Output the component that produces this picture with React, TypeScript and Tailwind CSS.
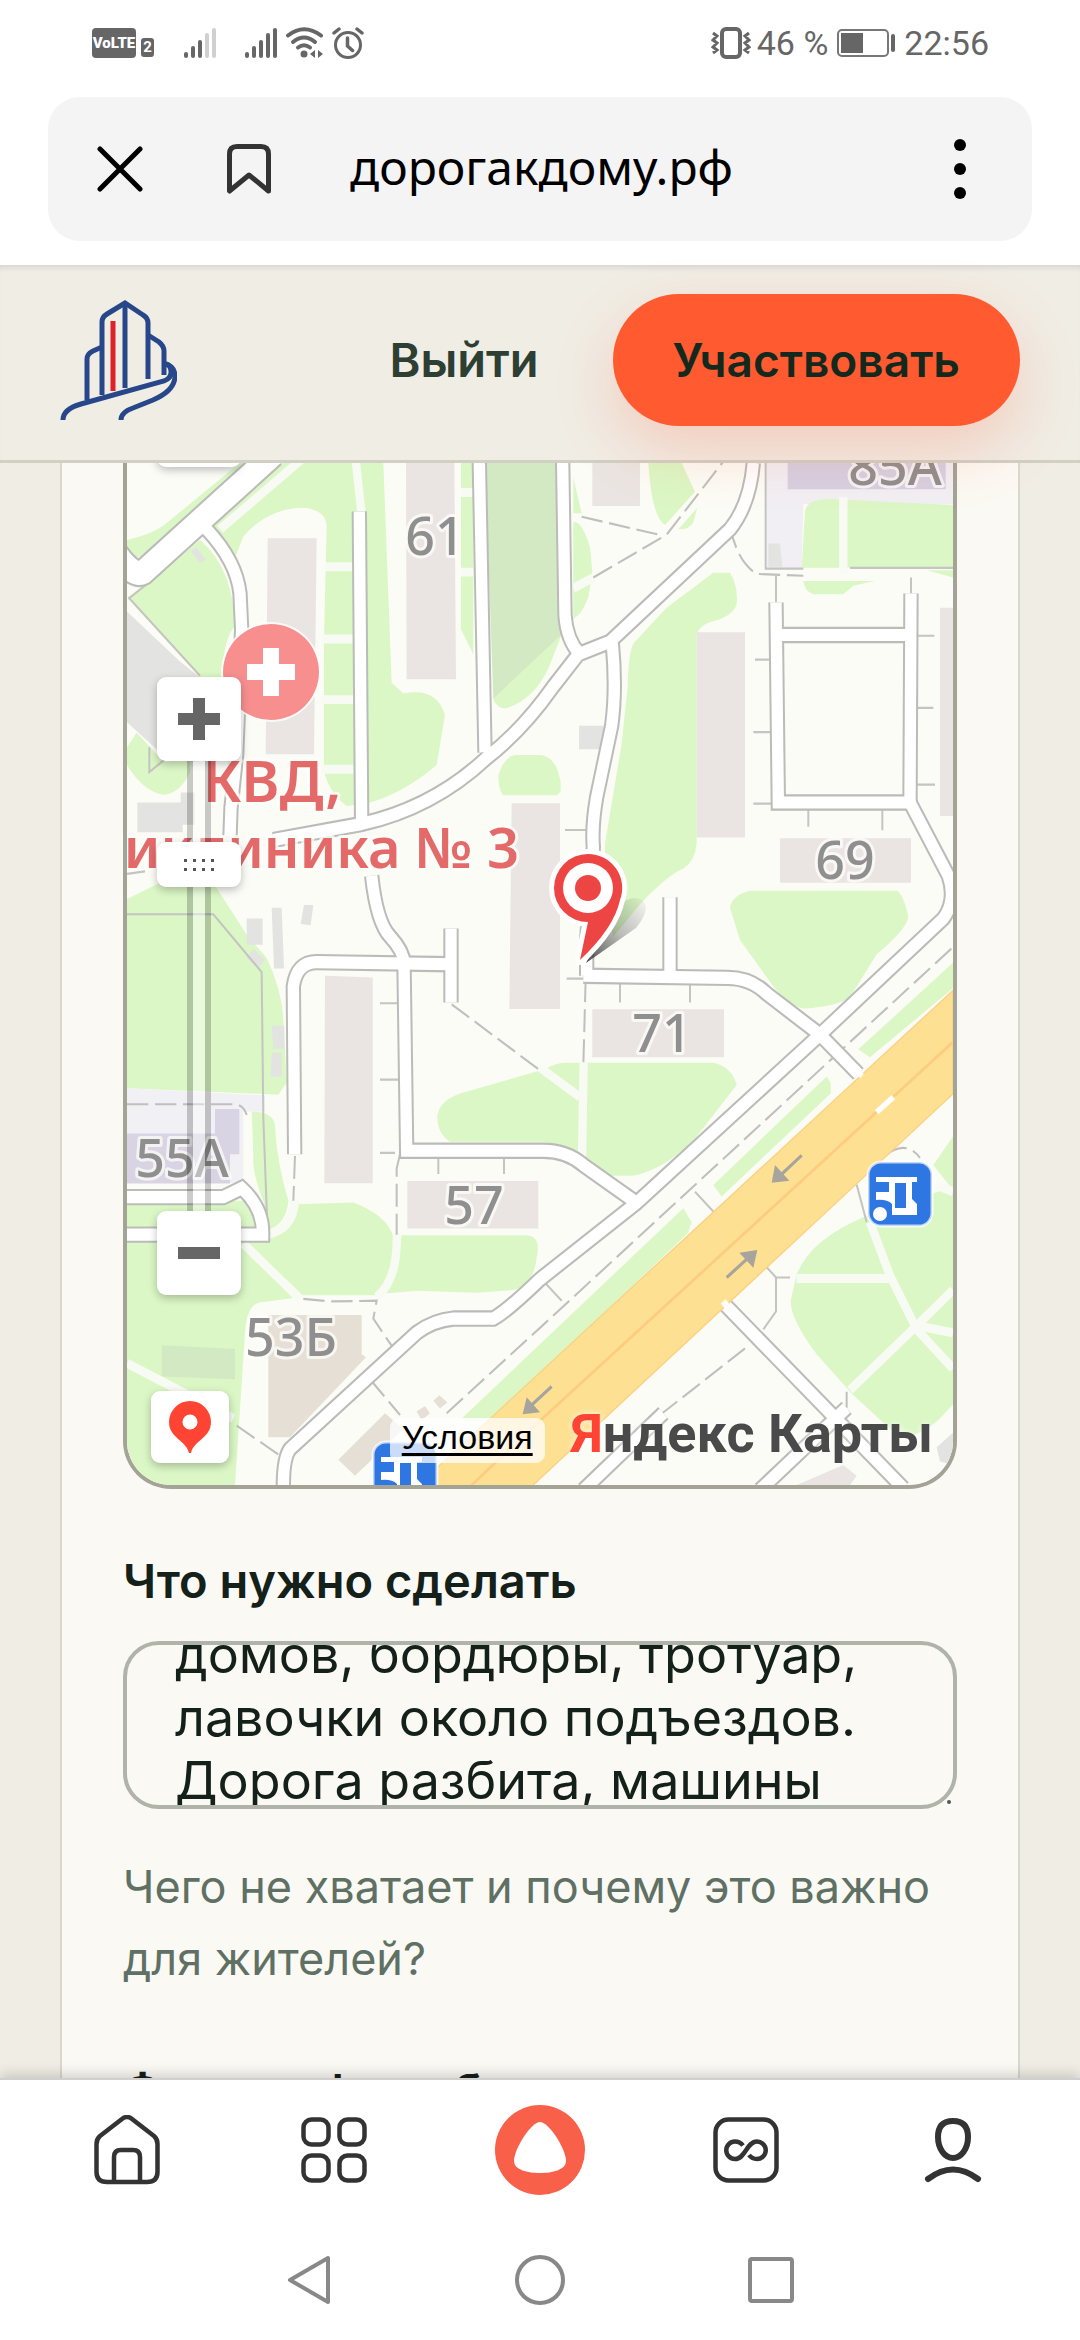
import { useEffect, useRef } from "react";

const signalBars = [
	{ x: 0, h: 6 },
	{ x: 7, h: 12 },
	{ x: 14, h: 18 },
	{ x: 21, h: 25 },
	{ x: 28, h: 30 },
];

function Signal({ level }: { level: number }) {
	return (
		<svg width={33} height={31} viewBox="0 0 33 31">
			{signalBars.map((b, k) => (
				<rect key={k} x={b.x} y={31 - b.h} width={4} height={b.h} rx={2} fill={k < level ? "#666" : "#d0d0d0"} />
			))}
		</svg>
	);
}

function StatusBar() {
	return (
		<div className="flex items-center h-[85px] pl-[92px] pr-[91px] font-['Roboto',sans-serif] text-[34px] leading-[40px] text-[#666]">
			<span className="flex items-center justify-center w-[44px] h-[30px] rounded-[4px] bg-[#666] text-white text-[15px] leading-[30px] font-black">
				VoLTE
			</span>
			<span className="self-center mt-[9px] ml-[5px] w-[13px] h-[19px] rounded-[3px] bg-[#666] text-white text-[15px] leading-[19px] font-bold text-center">
				2
			</span>
			<div className="ml-[30px] flex">
				<Signal level={3} />
			</div>
			<div className="ml-[28px] flex">
				<Signal level={5} />
			</div>

			{/* wifi */}
			<svg className="ml-[8px]" width={38} height={31} viewBox="0 0 38 31" fill="none" stroke="#666" strokeWidth={4} strokeLinecap="round">
				<path d="M2 8.500Q18 -4 35 8.500" />
				<path d="M7 15Q18 6 29 15" />
				<path d="M12 20.500Q18 16 24 20.500" />
				<circle cx={18} cy={27} r={3.500} fill="#666" stroke="none" />
				<path d="M24 27l5-4v8zM37 27l-5-4v8z" fill="#666" stroke="none" />
			</svg>

			{/* alarm */}
			<svg className="ml-[8px]" width={32} height={32} viewBox="0 0 32 32" fill="none" stroke="#666" strokeWidth={3} strokeLinecap="round">
				<circle cx={16} cy={18} r={12.500} />
				<path d="M15.500 11v8l5 4.500M2 6l5-4M30 6l-5-4" strokeWidth={3.500} />
			</svg>

			{/* vibration */}
			<svg className="ml-auto" width={40} height={32} viewBox="0 0 40 32" fill="none" stroke="#666">
				<rect x={11} y={2} width={18} height={28} rx={4} strokeWidth={4} />
				<path d="M2 6l4 3-4 4 4 3-4 4 4 3-4 3M38 6l-4 3 4 4-4 3 4 4-4 3 4 3" strokeWidth={3} />
			</svg>
			<span className="ml-[6px]">46 %</span>
			<svg className="ml-[9px]" width={58} height={28} viewBox="0 0 58 28">
				<rect x={1} y={1} width={50} height={26} rx={4} fill="none" stroke="#777" strokeWidth={2} />
				<rect x={4} y={4} width={22} height={20} fill="#666" />
				<rect x={54} y={5} width={4} height={18} rx={2} fill="#666" />
			</svg>
			<span className="ml-[9px]">22:56</span>
		</div>
	);
}

function AddressBar() {
	return (
		<div className="mx-[48px] mt-[12px] mb-[24px] h-[144px] rounded-[32px] bg-[#f4f4f4] flex items-center pl-[49px] pr-[66px]">
			<button aria-label="Закрыть">
				<svg width={46} height={46} viewBox="0 0 46 46" stroke="#000" strokeWidth={5} strokeLinecap="round">
					<path d="M3 3L43 43M43 3L3 43" />
				</svg>
			</button>
			<button aria-label="Закладка" className="ml-[84px]">
				<svg width={44} height={50} viewBox="0 0 44 50" fill="none" stroke="#333" strokeWidth={5} strokeLinejoin="round">
					<path d="M2.500 47V10Q2.500 2.500 10 2.500H34Q41.500 2.500 41.500 10V47L22 31Z" />
				</svg>
			</button>
			<span className="ml-[79px] pb-[4px] font-['Noto_Sans',sans-serif] text-[48px] leading-[60px] text-black">дорогакдому.рф</span>
			<button aria-label="Меню" className="ml-auto">
				<svg width={12} height={60} viewBox="0 0 12 60">
					<circle cx={6} cy={6} r={6} />
					<circle cx={6} cy={30} r={6} />
					<circle cx={6} cy={54} r={6} />
				</svg>
			</button>
		</div>
	);
}

function Logo() {
	return (
		<svg width={118} height={120} viewBox="58 299 118 120" fill="none" stroke="#28468a" strokeWidth={5}>
			<path d="M62 419Q62 408 80 403L163 380Q173 376 169 366Q168 363 164 363" />
			<path d="M164 363Q174 365 174 376Q173 390 152 399L132 407Q120 411 120 419" />
			<path d="M86 399V358Q86 353 92 350L101 346" />
			<path d="M101 394V321Q101 316 106 313L124 302L142 314Q147 317 147 322V378" />
			<path d="M124 302V387" />
			<path d="M147 334L158 341Q163 345 163 350V374" />
			<path d="M112 320V390" stroke="#dc2328" />
		</svg>
	);
}

function Header() {
	return (
		<header className="relative z-10 flex items-center h-[198px] pb-[5px] pl-[59px] pr-[60px] bg-[#f0ede5] border-b-[3px] border-[#d2cfc5] shadow-[inset_0_6px_6px_-4px_rgba(0,0,0,0.12)] font-['Inter',sans-serif] font-semibold">
			<Logo />
			<a href="#" className="ml-auto text-[47px] leading-[60px] text-[#2d3e33]">
				Выйти
			</a>
			<button className="ml-[74px] h-[132px] px-[60px] rounded-full bg-[#ff5a30] text-[46px] leading-[60px] text-[#14291d] shadow-[0_24px_60px_rgba(255,90,48,0.22)]">
				Участвовать
			</button>
		</header>
	);
}

const greens = [
	"M81 280Q150 265 190 240L420 64H850L875 680L910 710Q1010 690 1035 770L1010 910Q910 990 800 1018L740 1025Q690 990 672 930V560L680 240Q675 190 600 190Q500 195 430 270L405 330L340 245L110 330H81Z",
	"M150 400L300 280Q400 360 405 520Q370 560 370 640L420 664H300L85 440Z",
	"M110 820L190 900H270V930Q240 990 190 993Q130 985 81 910V860Z",
	"M1083 64H1120V600L1083 530Z",
	"M1180 725L1385 545L1345 640Q1300 730 1215 752Q1190 750 1180 725Z",
	"M1420 105L1445 205H1420ZM1420 230Q1445 225 1470 300L1477 370L1465 440Q1445 490 1420 500Z",
	"M81 1285L180 1240H340L440 1385L500 1450Q545 1540 550 1620L560 1800L535 1833L81 1815Z",
	"M1195 940Q1210 890 1245 882H1320Q1370 885 1382 960V985L1370 995H1210Q1195 980 1195 940Z",
	"M1645 64H1745L1785 145L1695 238Q1655 215 1645 64ZM1735 250L1792 190L1780 230Q1770 250 1735 250Z",
	"M2110 395H2325L2260 408L2230 432H2140Q2115 425 2110 395ZM2480 365L2559 385V365Z",
	"M1840 372H1890Q1915 410 1910 460Q1900 490 1850 505Q1800 515 1790 545V1130Q1785 1180 1750 1200Q1700 1220 1620 1300L1540 1390L1515 1300V1130L1565 850L1583 690Q1585 600 1600 570L1700 470Z",
	"M1890 1310Q1895 1275 1950 1262H2390Q2410 1270 2425 1335Q2420 1370 2330 1440L2250 1560Q2215 1585 2110 1592Q2070 1585 2020 1530L1920 1400Z",
	"M1340 1760Q1365 1744 1400 1744H1840Q1895 1755 1910 1806L1790 1950Q1700 2040 1600 2060H1530L1440 2000Q1380 1970 1330 1965H1050Q1010 1940 1012 1890Q1020 1850 1080 1830Z",
	"M1085 2740L1750 2151L1775 2190L1765 2220L1180 2740Z",
	"M1840 2086L2180 1782L2192 1800V1830L1865 2118Z",
	"M2275 1706L2559 1464V1535L2310 1728Z",
	"M2090 2336Q2130 2240 2290 2176L2559 2090V2700L2520 2740Q2460 2790 2400 2795L2255 2670L2150 2560Q2070 2460 2072 2410Z",
	"M2500 2030L2559 1950V2100Z",
	"M590 2140L760 2135Q860 2170 880 2230V2300Q870 2370 830 2395L600 2395L430 2250L520 2225Z",
	"M905 2227H1280Q1325 2230 1310 2290Q1300 2370 1240 2380L1130 2388L950 2382L830 2392L890 2330Z",
	"M81 2130H470V2250L600 2400L480 2415Q440 2420 435 2500L405 2926H81Z",
	"M455 1880Q520 1880 525 1920Q530 2020 565 2130Q560 2190 510 2210L490 2130Q455 2050 460 2000Z",
];

const greenPaths = [
	"M360 250L610 50",
	"M768 64L785 210",
	"M675 355H760",
	"M665 557H760",
	"M665 727H760",
	"M665 922H760",
	"M1083 147H1120M1083 370H1120",
	"M1420 415L1480 385",
	"M2230 160V375",
	"M1451 1744L1446 2010",
	"M1315 1754L1440 1840",
	"M2310 2190L2370 2340L2450 2490L2559 2600",
	"M2090 2348H2370",
	"M2450 2480L2250 2660M2450 2480L2559 2380M2450 2480L2559 2500M2505 2085L2559 2105",
	"M430 2250L600 2405",
	"M585 2130Q580 2210 500 2225",
	"M890 2220Q895 2350 830 2400",
	"M81 2585L400 2740",
];

const buildings = [
	"M503 275H650L642 880H497Z",
	"M918 64H1063L1068 670H920Z",
	"M1235 1017H1380V1593H1228Z",
	"M675 1500L818 1505V2081H673Z",
	"M1477 64H1620V185H1477Z",
	"M1790 538H1935V1113H1790Z",
	"M2040 1115H2433V1240H2040Z",
	"M2520 470H2559V1053H2520Z",
	"M1477 1594H1872V1728H1477Z",
	"M922 2075H1315V2208H922Z",
	"M2090 2926L2230 2870L2270 2900L2250 2926Z",
];

const grayBlocks = [
	"M81 480L240 620L300 664V900H210L81 790Z",
	"M112 1015H242V987H284V1077H248V1098H112Z",
	"M1437 800H1510V866H1437Z",
	"M440 1340H488V1413H440ZM515 1310H545L552 1480H522ZM612 1302H640L632 1359L602 1355Z",
	"M440 1450L460 1425L495 1455L475 1480ZM515 1640H553V1705H520ZM515 1715H545V1782H512Z",
	"M2005 290H2040L2047 355H2005Z",
	"M272 310L290 302L318 335L300 345Z",
	"M2510 2820L2559 2780V2870L2520 2860Z",
];

// center lines of the driveways, cased in grey
const roads = [
	"M320 250Q410 340 420 430L425 530L410 880L393 1030L390 1110",
	"M778 200L785 1075",
	"M1138 64L1155 875",
	"M520 1120L785 1075Q1000 1030 1160 890Q1270 810 1360 690L1435 600L1530 565L1890 250Q1950 180 1960 64",
	"M1388 64L1395 490Q1400 560 1440 600",
	"M1537 570Q1550 700 1535 800L1490 1000Q1475 1080 1480 1140L1460 1400V1500",
	"M2028 455L2035 1015H2430L2433 430",
	"M2030 546H2430",
	"M2430 1015L2545 1220Q2570 1290 2530 1340L2160 1665L1610 2136L1320 2350Q1220 2440 1180 2460H1060Q1000 2465 950 2500L570 2825Q550 2850 550 2930",
	"M1450 1500L1880 1506Q1950 1505 2000 1550L2160 1665L2275 1775",
	"M1710 1280V1500",
	"M1053 1368V1575",
	"M584 2000L580 1530Q590 1462 650 1462L1053 1468",
	"M815 1220Q830 1350 870 1390Q910 1430 912 1465L920 1990H1330Q1400 1990 1450 2030L1610 2136",
	"M81 2120H370L425 2095Q490 2150 488 2225H81",
	"M1875 2421L2410 2935",
	"M1980 2940L2240 2710",
	"M1450 2940L1690 2725",
];

const dashed = [
	"M1457 1510L1450 1750",
	"M1055 1580L1320 1765",
	"M585 2005L580 2130",
	"M900 2000L890 2040V2225",
	"M610 2405L690 2412L830 2410L820 2460L885 2550",
	"M810 2630L900 2730",
	"M410 2760L550 2850",
	"M1040 2725L1320 2486L2180 1746L2559 1420",
	"M1445 215L1690 268",
	"M1480 385L1700 265L1870 60",
	"M1890 240Q1910 340 1970 375L2110 380",
	"M1680 2730L1940 2540",
	"M2240 2710L2240 2665",
	"M81 1860H400Q430 1860 440 1890",
	"M2360 2000Q2420 1960 2460 2010",
];

const ticks = [
	"M1965 615H2030M1960 818H2032M1960 1018H2035",
	"M2435 548H2503M2433 750H2500M2428 965H2505",
	"M2125 1015V1083M2347 1018V1093",
	"M1560 1505V1575M1770 1505V1575M1400 1508H1465M1395 1092H1475",
	"M840 1577H920M840 1791H920M840 1996H885M1015 1990V2055M1212 1990V2055",
	"M2028 380V455M2433 385V430",
	"M1785 2105L1840 2160M1330 2355L1385 2410",
	"M2000 2316L2028 2345V2410L2028 2440L1990 2490M2028 2345H2070",
	"M2270 2085L2300 2190",
	"M85 440L300 660M85 445L145 400M148 860V930L200 890",
	"M81 1328H340L485 1490L490 1900L502 2200",
	"M1997 64V360H2110M2250 358H2559",
	"M81 1215L135 1208",
];

const labels = [
	{ text: "61", x: 435, y: 555 },
	{ text: "85А", x: 895, y: 485 },
	{ text: "69", x: 845, y: 879 },
	{ text: "71", x: 662, y: 1052 },
	{ text: "55А", x: 182, y: 1177 },
	{ text: "57", x: 474, y: 1224 },
	{ text: "53Б", x: 291, y: 1356 },
];

function BusStop({ x, y }: { x: number; y: number }) {
	return (
		<g transform={`translate(${x} ${y})`}>
			<rect width={64} height={64} rx={13} fill="#2e76e2" stroke="#fff" strokeOpacity={0.7} strokeWidth={3} />
			<path d="M8 15H49V20H44V37L49 42V53H24V42Q19 37 8 38V30H21V20H8Z" fill="#fff" />
			<path d="M27 21H38V46H27Z" fill="#2e76e2" />
			<circle cx={12} cy={52} r={7} fill="#fff" />
		</g>
	);
}

function MapCanvas() {
	return (
		<svg className="w-full h-full" viewBox="127 463 826 1022" preserveAspectRatio="xMidYMid slice">
			<defs>
				<linearGradient id="pinShadow" x1="0" y1="1" x2="1" y2="0">
					<stop offset="0" stopColor="#222" stopOpacity="0.8" />
					<stop offset="0.5" stopColor="#222" stopOpacity="0.3" />
					<stop offset="1" stopColor="#222" stopOpacity="0.02" />
				</linearGradient>
			</defs>
			<rect x={127} y={463} width={826} height={1022} fill="#fbfcf6" />

			<g transform="translate(100 440) scale(0.33333 0.35714)" fill="none">
				<path d="M2000 64H2559V180H2110L2105 360H2000Z" fill="#f1eff4" />
				<path d="M2063 64H2537V138H2063Z" fill="#d6d0e2" />
				<path d="M2115 200Q2120 165 2190 165L2559 182V358H2105Z" fill="#dbf7c5" />
				{greens.map((d, k) => (
					<path key={k} d={d} fill="#dbf7c5" />
				))}
				<path d="M1155 64H1367L1385 545L1180 725Z" fill="#d3e9c3" />
				<path d="M185 2535L405 2545V2630L185 2622Z" fill="#d3e9c3" />
				<path d="M81 1815L495 1835V1880H430V2080H81Z" fill="#f1f0f4" />
				<path d="M81 1942H345V1873H418V2000H390V2082H81Z" fill="#d8d4e3" />
				{grayBlocks.map((d, k) => (
					<path key={k} d={d} fill="#e3e3e2" />
				))}
				{greenPaths.map((d, k) => (
					<path key={k} d={d} stroke="#f8fbf3" strokeWidth={25} />
				))}
				{buildings.map((d, k) => (
					<path key={k} d={d} fill="#eae5e2" />
				))}
				<path d="M505 2450H785V2560L798 2568L570 2792H505Z" fill="#e6dfd5" />
				<path d="M715 2855L855 2725L910 2770L765 2900ZM950 2720L975 2705L990 2725L965 2745ZM1000 2690L1018 2675L1042 2695L1020 2712Z" fill="#e6dfd5" />

				{dashed.map((d, k) => (
					<path key={k} d={d} stroke="#bfbfbd" strokeWidth={6} strokeDasharray="64 20" />
				))}
				{ticks.map((d, k) => (
					<path key={k} d={d} stroke="#c4c4c1" strokeWidth={6} />
				))}

				{roads.map((d, k) => (
					<path key={k} d={d} stroke="#bbbbb9" strokeWidth={46} />
				))}
				<path d="M520 40L130 370Q100 385 50 320" stroke="#bbbbb9" strokeWidth={78} />
				{roads.map((d, k) => (
					<path key={k} d={d} stroke="#fff" strokeWidth={34} />
				))}
				<path d="M520 40L130 370Q100 385 50 320" stroke="#fff" strokeWidth={66} />

				{/* highway */}
				<path d="M950 2930L1180 2732L2559 1541V1831L1295 2930Z" fill="#fee092" stroke="#fdd083" strokeWidth={4} />
				<path d="M1115 2926L1320 2746L2559 1686" stroke="#fdcc80" strokeWidth={8} />
				<path d="M2330 1882L2380 1840M2275 1782L2285 1770M1868 2424L1882 2412" stroke="#fff" strokeWidth={16} />
				<path d="M2105 2003L2040 2060M1880 2345L1945 2290M1355 2650L1295 2702" stroke="#a6a49c" strokeWidth={9} />
				<path d="M2015 2080L2025 2030L2068 2074ZM1972 2268L1918 2276L1960 2318ZM1268 2728L1280 2680L1320 2722Z" fill="#a6a49c" />
			</g>

			<BusStop x={868} y={1162} />
			<BusStop x={373} y={1442} />

			<circle cx={271} cy={672} r={50} fill="#fff" fillOpacity={0.8} />
			<circle cx={271} cy={672} r={48} fill="#f88f8f" />
			<path d="M247 672H295M271 648V696" stroke="#fff" strokeWidth={16} />

			<g fontFamily="'Noto Sans', sans-serif" textAnchor="middle" stroke="#fdfdfa" strokeOpacity={0.75} strokeWidth={6} strokeLinejoin="round" paintOrder="stroke">
				{labels.map((l) => (
					<text key={l.text} x={l.x} y={l.y} fontSize={52} fontWeight={500} fill="#8f8f8f">
						{l.text}
					</text>
				))}
				<g fontSize={56} fontWeight={600} fill="#e46a6a">
					<text x={272} y={802} fontSize={58}>
						КВД,
					</text>
					<text x={519} y={868} textAnchor="end">
						Поликлиника № 3
					</text>
				</g>
			</g>

			{/* placemark */}
			<path d="M586 963L636 928Q652 908 642 900Q632 894 618 906L600 935Z" fill="url(#pinShadow)" />
			<path
				d="M588 854A34 34 0 0 0 588 922L580 960Q614 928 620 900A34 34 0 0 0 588 854Z"
				fill="#ed4543"
				stroke="#fff"
				strokeWidth={10}
				strokeLinejoin="round"
				paintOrder="stroke"
			/>
			<circle cx={588} cy={888} r={25} fill="#fff" />
			<circle cx={588} cy={888} r={13} fill="#ed4543" />
		</svg>
	);
}

function MapView() {
	return (
		<div className="relative h-[1026px] overflow-hidden rounded-b-[48px] border-[4px] border-t-0 border-[#a3a396]">
			<MapCanvas />

			{/* zoom column */}
			<div className="absolute left-[30px] -top-[80px] w-[84px] h-[84px] rounded-[9px] bg-white shadow-[0_3px_8px_rgba(0,0,0,0.25)]" />
			<div className="absolute left-[30px] top-[214px] w-[84px] h-[618px] flex flex-col items-center">
				<button aria-label="Приблизить" className="w-[84px] h-[84px] rounded-[9px] bg-white shadow-[0_3px_8px_rgba(0,0,0,0.25)] flex items-center justify-center">
					<svg width={42} height={42} viewBox="0 0 42 42" fill="#666">
						<path d="M15 0H27V15H42V27H27V42H15V27H0V15H15Z" />
					</svg>
				</button>
				<div className="flex-1 w-[24px] border-x-[6px] border-black/20 bg-white/40 bg-clip-padding" />
				<button aria-label="Отдалить" className="w-[84px] h-[84px] rounded-[9px] bg-white shadow-[0_3px_8px_rgba(0,0,0,0.25)] flex items-center justify-center">
					<span className="w-[42px] h-[12px] bg-[#666]" />
				</button>
			</div>
			<button aria-label="Масштаб" className="absolute left-[30px] top-[379px] w-[84px] h-[45px] rounded-[9px] bg-white shadow-[0_3px_8px_rgba(0,0,0,0.25)] flex items-center justify-center">
				<span className="grid grid-cols-4 gap-[6px]">
					{[0, 1, 2, 3, 4, 5, 6, 7].map((k) => (
						<span key={k} className="w-[3px] h-[3px] bg-[#555]" />
					))}
				</span>
			</button>

			{/* bottom row: open in maps, terms, copyright */}
			<div className="absolute left-[24px] right-[20px] bottom-[22px] h-[72px] flex items-center">
				<button aria-label="Открыть в картах" className="w-[78px] h-[72px] rounded-[9px] bg-white shadow-[0_3px_8px_rgba(0,0,0,0.25)] flex items-center justify-center">
					<svg width={42} height={53} viewBox="0 0 42 53">
						<path
							d="M21 0A21 21 0 0 0 0 21C0 37 17 39 20 52H22C25 39 42 37 42 21A21 21 0 0 0 21 0ZM21 13.500a7.500 7.500 0 1 1 0 15a7.500 7.500 0 1 1 0-15Z"
							fill="#ff4433"
							fillRule="evenodd"
						/>
					</svg>
				</button>
				<a href="#" className="ml-auto mt-[26px] h-[45px] px-[12px] rounded-[9px] bg-white/75 font-['Liberation_Sans',sans-serif] text-[34px] leading-[38px] text-black underline underline-offset-4">
					Условия
				</a>
				<a
					href="#"
					className="ml-[26px] mt-[14px] font-['Roboto',sans-serif] text-[54px] leading-[64px] font-bold text-[#4a4a4a] whitespace-nowrap [text-shadow:0_0_6px_rgba(255,255,255,0.8)]"
				>
					<span className="text-[#ff4433]">Я</span>ндекс Карты
				</a>
			</div>
		</div>
	);
}

function RequestForm() {
	const area = useRef<HTMLTextAreaElement>(null);

	useEffect(() => {
		if (area.current) area.current.scrollTop = 22;
	}, []);

	return (
		<main className="flex-1 min-h-0 overflow-hidden px-[60px] bg-[#f0ede5] font-['Inter',sans-serif] text-[#14201a]">
			<div className="h-full px-[61px] bg-[#fbf9f3] border-x-2 border-[#d9d8cf]">
				<MapView />

				<label htmlFor="needs" className="block mt-[56px] text-[47px] leading-[72px] font-semibold">
					Что нужно сделать
				</label>
				<div className="relative mt-[24px]">
					<textarea
						id="needs"
						ref={area}
						className="block w-full h-[168px] px-[48px] rounded-[36px] border-[4px] border-[#b0b3aa] bg-transparent text-[52px] leading-[63px] resize-none overflow-hidden outline-none"
						defaultValue={"домов, бордюры, тротуар,\nлавочки около подъездов.\nДорога разбита, машины"}
					/>
					<span className="absolute right-[6px] bottom-[5px] w-[4px] h-[4px] rounded-full bg-[#555]" />
				</div>
				<p className="mt-[42px] text-[45px] leading-[72px] text-[#5f7064]">Чего не хватает и почему это важно для жителей?</p>

				<h2 className="mt-[60px] text-[47px] leading-[72px] font-semibold">Фотографии объекта</h2>
			</div>
		</main>
	);
}

function TabBar() {
	return (
		<nav className="relative z-10 grid grid-cols-5 px-[24px] h-[142px] items-center justify-items-center border-t-2 border-[#d0d0d0] bg-white shadow-[0_-4px_12px_rgba(0,0,0,0.16)]">
			<button aria-label="Домой">
				<svg width={66} height={70} viewBox="0 0 66 70" fill="none" stroke="#333" strokeWidth={4.500} strokeLinejoin="round">
					<path d="M2.500 29Q2.500 24 6 21L28 4Q33 0 38 4L60 21Q63.500 24 63.500 29V57Q63.500 67 53 67H13Q2.500 67 2.500 57Z" />
					<path d="M20 67V42Q20 35 27 35H39Q46 35 46 42V67" />
				</svg>
			</button>
			<button aria-label="Сервисы">
				<svg width={66} height={66} viewBox="0 0 66 66" fill="none" stroke="#333" strokeWidth={4.500}>
					<rect x={2.500} y={2.500} width={25} height={25} rx={8} />
					<rect x={38.500} y={2.500} width={25} height={25} rx={8} />
					<rect x={2.500} y={38.500} width={25} height={25} rx={8} />
					<rect x={38.500} y={38.500} width={25} height={25} rx={8} />
				</svg>
			</button>
			<button aria-label="Алиса">
				<svg width={90} height={90} viewBox="0 0 90 90">
					<circle cx={45} cy={45} r={45} fill="#f9604a" />
					<path d="M45 17C54 17 71 44 71 56C71 65 57 68 45 68C33 68 19 65 19 56C19 44 36 17 45 17Z" fill="#fff" />
				</svg>
			</button>
			<button aria-label="Вкладки">
				<svg width={66} height={66} viewBox="0 0 66 66" fill="none" stroke="#333" strokeWidth={4.500}>
					<rect x={2.500} y={2.500} width={61} height={61} rx={13} />
					<path d="M30 28.500Q27 24.500 22 24.500A8.750 8.750 0 0 0 22 42C32.500 42 33.500 24.500 44 24.500A8.750 8.750 0 0 1 44 42Q39 42 36 38" />
				</svg>
			</button>
			<button aria-label="Профиль">
				<svg width={58} height={66} viewBox="0 0 58 66" fill="none" stroke="#333" strokeWidth={6} strokeLinecap="round">
					<path d="M29 4Q44 4 44 20C44 32 37 41 29 41C21 41 14 32 14 20Q14 4 29 4Z" />
					<path d="M4 62Q29 43 54 62" />
				</svg>
			</button>
		</nav>
	);
}

function SystemNav() {
	return (
		<div className="relative z-10 grid grid-cols-3 px-[194px] h-[120px] items-center justify-items-center bg-white">
			<button aria-label="Назад">
				<svg width={44} height={50} viewBox="0 0 44 50" fill="none" stroke="#888" strokeWidth={4} strokeLinejoin="round">
					<path d="M41 3V47L3 25Z" />
				</svg>
			</button>
			<button aria-label="Главный экран" className="w-[50px] h-[50px] rounded-full border-[4px] border-[#888]" />
			<button aria-label="Недавние" className="w-[46px] h-[46px] rounded-[4px] border-[4px] border-[#888]" />
		</div>
	);
}

export default function App() {
	return (
		<div className="h-screen flex flex-col bg-white overflow-hidden">
			<StatusBar />
			<AddressBar />
			<Header />
			<RequestForm />
			<TabBar />
			<SystemNav />
		</div>
	);
}
